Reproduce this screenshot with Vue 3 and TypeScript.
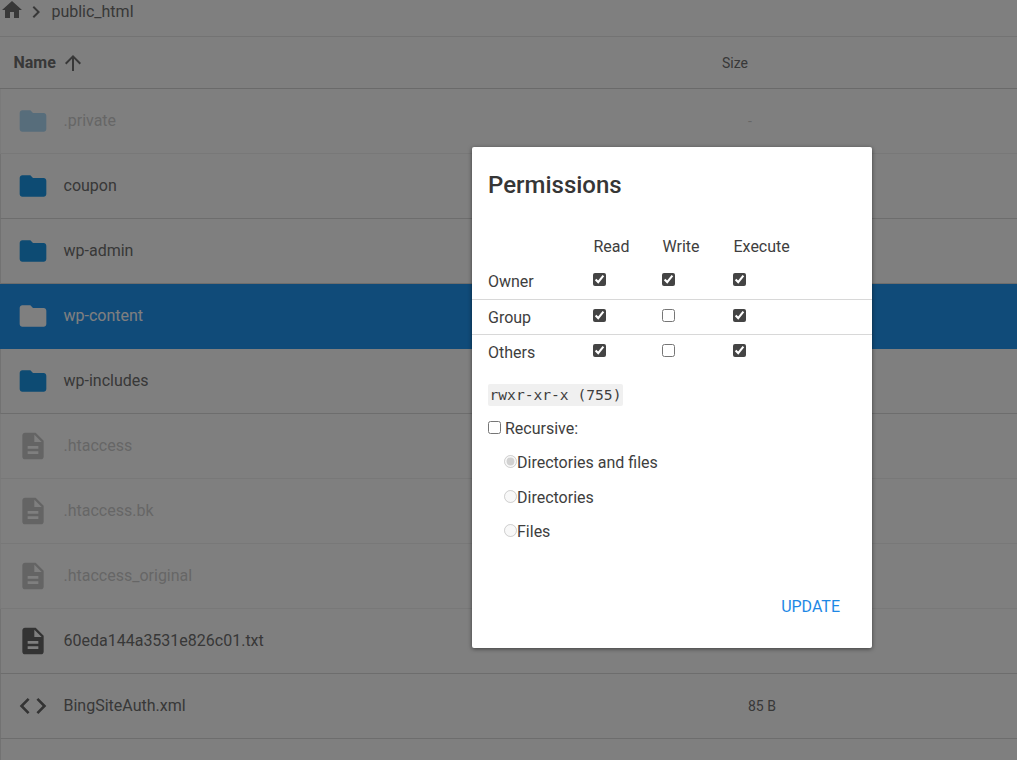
<script setup lang="ts">
import { reactive, ref } from 'vue'

type IconName = 'folder' | 'file' | 'code'

interface Entry {
  name: string
  icon: IconName
  size?: string
  hidden?: boolean
  selected?: boolean
}

const icons: Record<IconName, string> = {
  folder: 'M10 4H4c-1.1 0-1.99.9-1.99 2L2 18c0 1.1.9 2 2 2h16c1.1 0 2-.9 2-2V8c0-1.1-.9-2-2-2h-8l-2-2z',
  file: 'M14 2H6c-1.1 0-1.99.9-1.99 2L4 20c0 1.1.89 2 1.99 2H18c1.1 0 2-.9 2-2V8l-6-6zm2 16H8v-2h8v2zm0-4H8v-2h8v2zm-3-5V3.500L18.500 9H13z',
  code: 'M9.400 16.600L4.800 12l4.600-4.600L8 6l-6 6 6 6 1.400-1.400zm5.200 0l4.600-4.600-4.600-4.600L16 6l6 6-6 6-1.400-1.400z',
}

const entries: Entry[] = [
  { name: '.private', icon: 'folder', size: '-', hidden: true },
  { name: 'coupon', icon: 'folder' },
  { name: 'wp-admin', icon: 'folder' },
  { name: 'wp-content', icon: 'folder', selected: true },
  { name: 'wp-includes', icon: 'folder' },
  { name: '.htaccess', icon: 'file', hidden: true },
  { name: '.htaccess.bk', icon: 'file', hidden: true },
  { name: '.htaccess_original', icon: 'file', hidden: true },
  { name: '60eda144a3531e826c01.txt', icon: 'file' },
  { name: 'BingSiteAuth.xml', icon: 'code', size: '85 B' },
]

const permissions = reactive([
  { label: 'Owner', read: true, write: true, execute: true },
  { label: 'Group', read: true, write: false, execute: true },
  { label: 'Others', read: true, write: false, execute: true },
])

const recursive = ref(false)
const target = ref('Directories and files')
const targets = ['Directories and files', 'Directories', 'Files']
</script>

<template>
  <div class="screen">
    <main class="browser">
      <nav class="crumbs">
        <svg class="home" viewBox="0 0 24 24"><path d="M10 20v-6h4v6h5v-8h3L12 3 2 12h3v8z" /></svg>
        <svg class="chevron" viewBox="0 0 24 24"><path d="M10 6L8.590 7.410 13.170 12l-4.580 4.590L10 18l6-6z" /></svg>
        <span>public_html</span>
      </nav>
      <div class="head">
        <strong>Name</strong>
        <svg class="sort" viewBox="0 0 24 24"><path d="M4 12l1.410 1.410L11 7.830V20h2V7.830l5.580 5.590L20 12l-8-8-8 8z" /></svg>
        <span class="size-title">Size</span>
      </div>
      <div class="rows">
        <div
          v-for="entry in entries"
          :key="entry.name"
          class="row"
          :class="[entry.icon, { faded: entry.hidden, selected: entry.selected }]"
        >
          <svg class="icon" viewBox="0 0 24 24"><path :d="icons[entry.icon]" /></svg>
          <span class="name">{{ entry.name }}</span>
          <span class="size">{{ entry.size }}</span>
        </div>
        <div class="row"></div>
      </div>
    </main>

    <div class="backdrop">
      <section class="dialog" role="dialog" aria-label="Permissions">
        <h2>Permissions</h2>
        <div class="grid titles">
          <span></span><span>Read</span><span>Write</span><span>Execute</span>
        </div>
        <div v-for="p in permissions" :key="p.label" class="grid perm">
          <span>{{ p.label }}</span>
          <input v-model="p.read" type="checkbox" />
          <input v-model="p.write" type="checkbox" />
          <input v-model="p.execute" type="checkbox" />
        </div>
        <div class="mode"><code>rwxr-xr-x (755)</code></div>
        <label class="recursive"><input v-model="recursive" type="checkbox" />Recursive:</label>
        <div class="targets">
          <label v-for="t in targets" :key="t">
            <input v-model="target" type="radio" name="target" :value="t" :disabled="!recursive" />{{ t }}
          </label>
        </div>
        <footer><button type="button">UPDATE</button></footer>
      </section>
    </div>
  </div>
</template>

<style>
body {
  margin: 0;
  overflow: hidden;
}
</style>

<style scoped>
.screen {
  position: relative;
  height: 760px;
  overflow: hidden;
  background: #fff;
  color: #707070;
  font: 16px Roboto, sans-serif;
}
.crumbs {
  box-sizing: border-box;
  height: 37px;
  padding-bottom: 13px;
  display: flex;
  align-items: center;
  border-bottom: 1px solid #e6e6e6;
}
svg {
  fill: currentColor;
  flex: none;
}
.home {
  width: 24px;
  height: 24px;
  margin-top: -3px;
}
.chevron {
  width: 24px;
  height: 24px;
}
.crumbs span {
  margin-left: 3.4px;
}
.head {
  box-sizing: border-box;
  height: 52px;
  padding-left: 13.5px;
  display: flex;
  align-items: center;
  border-bottom: 1px solid #d4d4d4;
}
.head strong {
  width: 47.5px;
  font-weight: 700;
}
.sort {
  width: 24px;
  height: 24px;
}
.size-title {
  margin-left: 637px;
  font-size: 14px;
}
.row {
  box-sizing: border-box;
  height: 65px;
  padding-left: 16px;
  display: flex;
  align-items: center;
  border-bottom: 1px solid #dadada;
  border-left: 1px solid #e4e4e4;
}
.icon {
  width: 32px;
  height: 32px;
}
.folder .icon {
  color: #1b96e6;
}
.file .icon,
.code .icon {
  color: #666;
}
.name {
  width: 684.5px;
  margin-left: 14.5px;
  padding-bottom: 1px;
}
.size {
  font-size: 14px;
}
.faded {
  opacity: 0.35;
}
.selected {
  color: #fff;
  background: #2196f3;
  border-color: #2196f3;
}
.selected .icon {
  color: #fff;
}
.backdrop {
  position: absolute;
  inset: 0;
  display: flex;
  justify-content: flex-end;
  align-items: flex-start;
  padding: 147px 145px 0 0;
  background: rgba(0, 0, 0, 0.5);
}
.dialog {
  box-sizing: border-box;
  width: 400px;
  height: 501px;
  background: #fff;
  border-radius: 2px;
  color: #3e3e3e;
  box-shadow: 0 1px 4px rgba(0, 0, 0, 0.5);
}
h2 {
  margin: 0;
  padding: 22px 16px 0;
  color: #363636;
  font-size: 24px;
  line-height: 32px;
  font-weight: 500;
}
input {
  width: 13px;
  height: 13px;
  margin: 0;
  accent-color: #444;
}
.grid {
  box-sizing: border-box;
  display: grid;
  grid-template-columns: 105px 69px 71px 1fr;
  align-items: center;
  padding-left: 16px;
}
.titles {
  margin-top: 28px;
  height: 35px;
  padding-left: 16.5px;
}
.perm {
  height: 36px;
  padding-bottom: 1px;
  border-bottom: 1px solid #d8d8d8;
}
.perm input {
  margin-bottom: 3px;
}
.perm + .perm {
  height: 35px;
}
.perm + .perm input {
  margin-bottom: 2px;
}
.perm + .perm span {
  padding-top: 1px;
}
.perm:nth-of-type(4) {
  border-bottom-color: transparent;
}
.mode {
  height: 41.5px;
  padding: 14px 16px 0;
  box-sizing: border-box;
}
code {
  display: block;
  width: 135px;
  height: 22px;
  box-sizing: border-box;
  padding-left: 1.5px;
  background: #f0f0f0;
  border-radius: 2px;
  font: 14.62px/22px "DejaVu Sans Mono", monospace;
  white-space: pre;
}
.recursive {
  display: flex;
  align-items: center;
  gap: 4px;
  height: 34px;
  margin-left: 16px;
}
.recursive input {
  margin-bottom: 2px;
}
.targets {
  margin-left: 32px;
}
.targets label {
  display: flex;
  align-items: center;
  height: 34.5px;
}
.targets input {
  margin-bottom: 2px;
}
footer {
  display: flex;
  justify-content: flex-end;
  padding: 40px 32px 0 0;
}
button {
  padding: 0;
  border: 0;
  background: none;
  color: #1e88e5;
  font: 16px/36px Roboto, sans-serif;
}
</style>
